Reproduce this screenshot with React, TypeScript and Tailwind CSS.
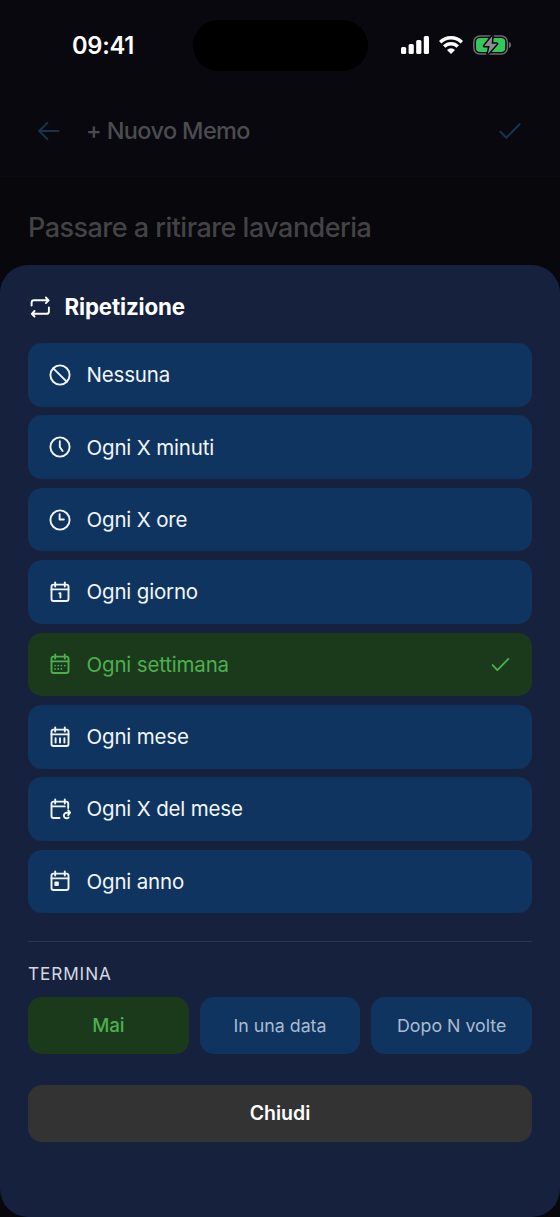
import clsx from "clsx";
import * as React from "react";

interface IconProps {
  className?: string;
}

function Icon({
  className,
  children,
}: IconProps & { children: React.ReactNode }) {
  return (
    <svg
      viewBox="0 0 24 24"
      fill="none"
      stroke="currentColor"
      strokeWidth={1.9}
      strokeLinecap="round"
      strokeLinejoin="round"
      aria-hidden="true"
      className={clsx("size-6 shrink-0", className)}
    >
      {children}
    </svg>
  );
}

function IconRepeat({ className }: IconProps) {
  return (
    <Icon className={className}>
      <path d="M3.6 10.5V7.7a2.4 2.4 0 0 1 2.4-2.4h14.2M17.900 2.500l2.7 2.800-2.7 2.800" />
      <path d="M20.900 12.500v3.900a2.4 2.4 0 0 1-2.4 2.4H4M6.5 16l-2.7 2.800 2.7 2.700" />
    </Icon>
  );
}

function IconNone() {
  return (
    <Icon>
      <circle cx="12" cy="12" r="9.6" />
      <path d="m5.3 5.3 13.4 13.4" />
    </Icon>
  );
}

function IconMinutes() {
  return (
    <Icon>
      <circle cx="12" cy="12" r="9.6" />
      <path d="M11.8 6.3V12l2.8 4" />
    </Icon>
  );
}

function IconHours() {
  return (
    <Icon>
      <circle cx="12" cy="12" r="9.6" />
      <path d="M11.6 6.3v5.2h4.2" />
    </Icon>
  );
}

function CalendarFrame({ children }: { children: React.ReactNode }) {
  return (
    <Icon>
      <rect x="3.5" y="4.6" width="17" height="16.4" rx="2" />
      <path d="M7.2 2.4v4.2M16.8 2.4v4.2M3.5 9.4h17" />
      {children}
    </Icon>
  );
}

function IconDay() {
  return (
    <CalendarFrame>
      <path d="m11.2 13.4 1.2-.2v4.4" />
    </CalendarFrame>
  );
}

function IconWeek() {
  return (
    <CalendarFrame>
      <path
        d="M7 16.9h.01M10.2 16.9h.01M13.4 16.9h.01M7 13.6h.01M10.2 13.6h.01M13.4 13.6h.01M16.8 13.6h.01"
        strokeWidth={1.8}
      />
    </CalendarFrame>
  );
}

function IconMonth() {
  return (
    <CalendarFrame>
      <path d="M7.6 13.2v4.4M12 13.2v4.4M16.4 13.2v4.4" />
    </CalendarFrame>
  );
}

function IconMonthDay() {
  return (
    <Icon>
      <path d="M11.5 21h-6a2 2 0 0 1-2-2V6.6a2 2 0 0 1 2-2h12.7a2 2 0 0 1 2 2V11M3.5 9.4h13.3M7.2 2.4v4.2M16.8 2.4v4.2" />
      <path d="M21.8 15.7h-3.2a2.8 2.8 0 1 0 2 4.800M20.200 13.300l1.900 2.400-1.900 2.400" />
    </Icon>
  );
}

function IconYear() {
  return (
    <CalendarFrame>
      <rect x="7.3" y="13.5" width="2.6" height="2.6" fill="currentColor" />
    </CalendarFrame>
  );
}

function IconCheck({ className }: IconProps) {
  return (
    <Icon className={className}>
      <path d="m3.8 12.6 5 5.2L20.2 6.2" />
    </Icon>
  );
}

function StatusBar() {
  return (
    <div className="flex h-[90px] items-center pl-[72px]">
      <div className="w-[120.5px] pt-px text-[23.7px] font-semibold tracking-[-0.3px]">
        09:41
      </div>
      <div className="h-[51px] w-[175px] rounded-full bg-black" />
      <div className="ml-[33.5px] flex items-center">
        <svg viewBox="0 0 28 18" className="mr-[10px] h-[18px] w-7" fill="white">
          <rect x="0" y="11" width="5.2" height="7" rx="1.6" />
          <rect x="7.6" y="8" width="5.2" height="10" rx="1.6" />
          <rect x="15.2" y="4" width="5.2" height="14" rx="1.6" />
          <rect x="22.8" y="0" width="5.2" height="18" rx="1.6" />
        </svg>
        <svg viewBox="0 0 24 18" className="mr-[9.5px] h-[18px] w-6" fill="none">
          <g stroke="white" strokeWidth={3.5}>
            <path d="M1.2 6.3a15.3 15.3 0 0 1 21.6 0" />
            <path d="M5.2 10.6a9.6 9.6 0 0 1 13.6 0" />
          </g>
          <path d="M12 18 8 13.9a6 6 0 0 1 8 0z" fill="white" />
        </svg>
        <svg viewBox="0 0 39 20" className="h-5 w-[39px] shrink-0" fill="none">
          <rect
            x="0.8"
            y="0.9"
            width="33.6"
            height="18.2"
            rx="6"
            stroke="#6b6a6f"
            strokeWidth={1.5}
          />
          <path d="M36 7c1.4.4 2 1.6 2 3s-.6 2.6-2 3z" fill="#6b6a6f" />
          <rect x="3" y="3" width="29.2" height="14" rx="4" fill="#34c759" />
          <path
            d="M19.3 1 11.3 11h5.4L14.7 19.2 23.9 8.800h-5.300z"
            fill="#8e8d92"
            stroke="#08080e"
            strokeWidth={3}
            strokeLinejoin="round"
            paintOrder="stroke"
          />
        </svg>
      </div>
    </div>
  );
}

const repetitions = [
  { label: "Nessuna", icon: <IconNone /> },
  { label: "Ogni X minuti", icon: <IconMinutes /> },
  { label: "Ogni X ore", icon: <IconHours /> },
  { label: "Ogni giorno", icon: <IconDay /> },
  { label: "Ogni settimana", icon: <IconWeek /> },
  { label: "Ogni mese", icon: <IconMonth /> },
  { label: "Ogni X del mese", icon: <IconMonthDay /> },
  { label: "Ogni anno", icon: <IconYear /> },
];

const endings = ["Mai", "In una data", "Dopo N volte"];

function RepeatSheet() {
  const [repetition, setRepetition] = React.useState("Ogni settimana");
  const [ending, setEnding] = React.useState("Mai");
  return (
    <div className="flex flex-1 flex-col rounded-[28px] bg-[#16213e] px-7 pt-[26px]">
      <h2 className="flex h-8 items-center gap-[12.5px] text-[22.3px] font-bold tracking-[-0.14px]">
        <IconRepeat />
        Ripetizione
      </h2>
      <div className="mt-5 flex flex-col gap-[8.7px]">
        {repetitions.map(({ label, icon }) => {
          const selected = label === repetition;
          return (
            <button
              key={label}
              onClick={() => setRepetition(label)}
              aria-pressed={selected}
              className={clsx(
                "flex h-[63.7px] items-center gap-[14.5px] rounded-[14px] px-5 text-left text-[20.5px] tracking-[-0.17px]",
                selected
                  ? "bg-[#1b3a1b] text-[#4caf50]"
                  : "bg-[#0f3460] text-[#f2f6fa]"
              )}
            >
              {icon}
              <span className="flex-1 pt-[1.5px]">{label}</span>
              {selected && <IconCheck className="size-[23px]" />}
            </button>
          );
        })}
      </div>
      <div className="mt-[27.6px] border-t border-[#2d3751]" />
      <div className="mt-5 h-6 text-[17.2px] leading-6 tracking-[0.9px] text-[#d5d8e0]">
        TERMINA
      </div>
      <div className="mt-[11.2px] grid grid-cols-3 gap-[11px]">
        {endings.map((label) => (
          <button
            key={label}
            onClick={() => setEnding(label)}
            aria-pressed={label === ending}
            className={clsx(
              "h-[57px] rounded-[14px] pt-px",
              label === ending
                ? "bg-[#1b3a1b] text-[18.8px] font-medium tracking-[-0.1px] text-[#4caf50]"
                : "bg-[#0f3460] text-[17.8px] text-[#aabbd0]"
            )}
          >
            {label}
          </button>
        ))}
      </div>
      <button className="mt-[31px] h-[57px] rounded-[14px] bg-[#333333] text-[19.5px] font-semibold">
        Chiudi
      </button>
    </div>
  );
}

export default function App() {
  return (
    <div className="flex h-[1217px] w-[560px] flex-col bg-[#07070c] font-[Inter,sans-serif] text-white">
      <div className="border-b border-[#0b0b11] bg-[#08080e]">
        <StatusBar />
        <div className="flex h-[86px] items-center px-9 pb-1">
          <svg
            viewBox="0 0 24 24"
            fill="none"
            stroke="#15344b"
            strokeWidth={1.9}
            strokeLinecap="round"
            strokeLinejoin="round"
            className="mr-[26px] size-6"
          >
            <path d="M22.5 12H3M11.5 3.8 3.2 12l8.3 8.2" />
          </svg>
          <h1 className="flex-1 text-[23.5px] font-medium tracking-[-0.63px] text-[#4c4c4e]">
            + Nuovo Memo
          </h1>
          <IconCheck className="size-7 text-[#15344b]" />
        </div>
      </div>
      <div className="flex h-[88px] items-center px-7 pt-3.5 text-[27px] font-medium tracking-[-0.53px] text-[#434345]">
        Passare a ritirare lavanderia
      </div>
      <RepeatSheet />
    </div>
  );
}
